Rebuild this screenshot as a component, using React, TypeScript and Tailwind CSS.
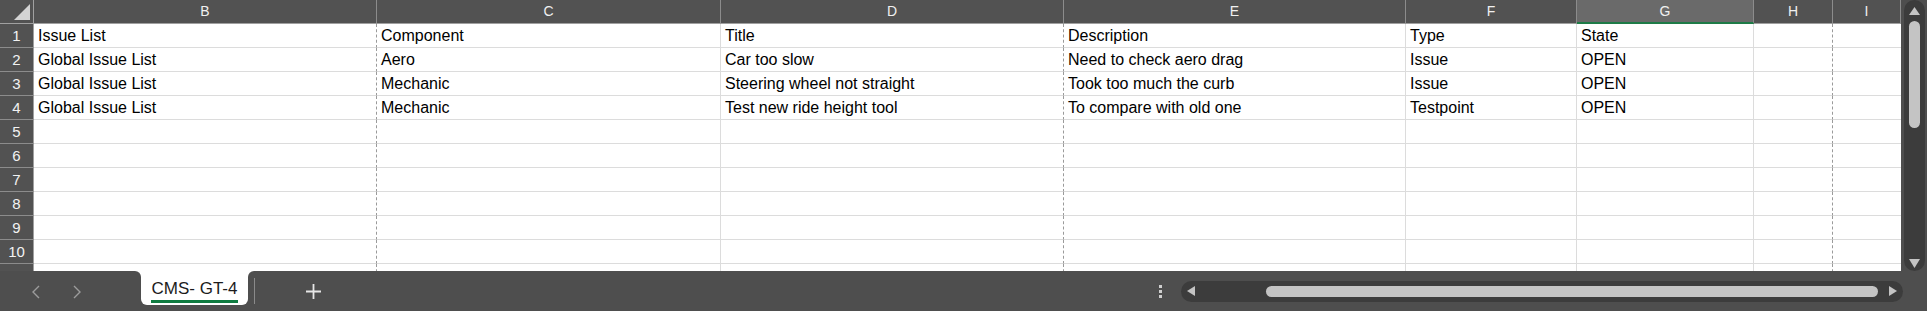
import React from 'react';

// Excel-like sheet view in dark chrome: column/row headers, grid, sheet tabs and scrollbars.

type Col = { label: string; width: string; border: string; selected?: boolean };

const columns: Col[] = [
  { label: 'B', width: 'w-[343px]', border: 'border-r [border-right-style:dashed] border-r-[#9a9a9a]' },
  { label: 'C', width: 'w-[344px]', border: 'border-r border-r-[#dcdcdc]' },
  { label: 'D', width: 'w-[343px]', border: 'border-r [border-right-style:dashed] border-r-[#9a9a9a]' },
  { label: 'E', width: 'w-[342px]', border: 'border-r border-r-[#dcdcdc]' },
  { label: 'F', width: 'w-[171px]', border: 'border-r border-r-[#dcdcdc]' },
  { label: 'G', width: 'w-[177px]', border: 'border-r border-r-[#dcdcdc]', selected: true },
  { label: 'H', width: 'w-[79px]', border: 'border-r [border-right-style:dashed] border-r-[#9a9a9a]' },
  { label: 'I', width: 'w-[68px]', border: '' },
];

const rows: string[][] = [
  ['Issue List', 'Component', 'Title', 'Description', 'Type', 'State', '', ''],
  ['Global Issue List', 'Aero', 'Car too slow', 'Need to check aero drag', 'Issue', 'OPEN', '', ''],
  ['Global Issue List', 'Mechanic', 'Steering wheel not straight', 'Took too much the curb', 'Issue', 'OPEN', '', ''],
  ['Global Issue List', 'Mechanic', 'Test new ride height tool', 'To compare with old one', 'Testpoint', 'OPEN', '', ''],
  ['', '', '', '', '', '', '', ''],
  ['', '', '', '', '', '', '', ''],
  ['', '', '', '', '', '', '', ''],
  ['', '', '', '', '', '', '', ''],
  ['', '', '', '', '', '', '', ''],
  ['', '', '', '', '', '', '', ''],
  ['', '', '', '', '', '', '', ''],
];

const HeaderRow = () => (
  <div className="flex h-[24px] shrink-0">
    <div className="w-[34px] h-[24px] bg-[#525252] border-r border-b border-[#a0a0a0] flex items-end justify-end pr-[3px] pb-[3px]">
      <svg width="16" height="16" viewBox="0 0 16 16">
        <polygon points="16,0 16,16 0,16" fill="#d4d4d4" />
      </svg>
    </div>
    {columns.map((c) => (
      <div
        key={c.label}
        className={`${c.width} h-[24px] flex items-center justify-center text-[14px] text-[#f0f0f0] border-r border-r-[#8c8c8c] ${
          c.selected ? 'bg-[#6a6a6a] border-b-2 border-b-[#1e7b47]' : 'bg-[#525252] border-b border-b-[#a0a0a0]'
        }`}
      >
        {c.label}
      </div>
    ))}
  </div>
);

const DataRow = ({ n, cells }: { n: number; cells: string[] }) => (
  <div className="flex h-[24px] shrink-0">
    <div className="w-[34px] h-[24px] bg-[#525252] border-r border-r-[#a0a0a0] border-b border-b-[#8c8c8c] flex items-center justify-center text-[15px] leading-[23px] text-[#f2f2f2]">
      {n}
    </div>
    {columns.map((c, i) => (
      <div
        key={c.label}
        className={`${c.width} ${c.border} h-[24px] border-b border-b-[#dcdcdc] bg-white pl-[4px] text-[16px] leading-[23px] text-black whitespace-nowrap overflow-hidden`}
      >
        {cells[i]}
      </div>
    ))}
  </div>
);

const VerticalScroll = () => (
  <div className="w-[26px] h-[271px] bg-[#4e4e4e] pl-[3px] pr-[2px] shrink-0">
    <div className="w-[21px] h-[271px] rounded-full bg-[#3c3c3c] flex flex-col items-center pt-[7px] pb-[3px]">
      <svg width="11" height="8" viewBox="0 0 11 8">
        <polygon points="5.5,0 11,8 0,8" fill="#c4c4c4" />
      </svg>
      <div className="w-[11px] h-[107px] mt-[6px] rounded-full bg-[#c4c4c4]" />
      <div className="flex-1" />
      <svg width="11" height="9" viewBox="0 0 11 9">
        <polygon points="0,0 11,0 5.5,9" fill="#c4c4c4" />
      </svg>
    </div>
  </div>
);

const Chevron = ({ dir }: { dir: 'left' | 'right' }) => (
  <svg width="8" height="14" viewBox="0 0 8 14">
    <polyline
      points={dir === 'left' ? '7,1 1,7 7,13' : '1,1 7,7 1,13'}
      fill="none"
      stroke="#9c9c9c"
      strokeWidth="1.4"
    />
  </svg>
);

const SheetBar = () => (
  <div className="flex h-[40px] bg-white shrink-0">
    {/* navigation arrows */}
    <div className="w-[141px] h-[40px] bg-[#4e4e4e] rounded-tr-[6px] flex items-center pl-[32px] pt-[1px]">
      <Chevron dir="left" />
      <div className="ml-[33px]">
        <Chevron dir="right" />
      </div>
    </div>

    {/* active tab */}
    <div className="w-[107px] h-[40px] bg-[#4e4e4e]">
      <div className="h-[34px] bg-white rounded-b-[6px] flex flex-col items-center pt-[8px]">
        <span className="text-[17px] leading-[19px] text-[#1c1c1c] whitespace-nowrap">CMS- GT-4</span>
        <div className="w-[87px] h-[3px] mt-[2px] bg-[#107c41]" />
      </div>
    </div>

    {/* new sheet + horizontal scroll */}
    <div className="flex-1 h-[40px] bg-[#4e4e4e] rounded-tl-[6px] flex items-center pr-[24px]">
      <div className="ml-[6px] w-px h-[26px] bg-[#8a8a8a]" />
      <div className="ml-[51px]">
        <svg width="15" height="15" viewBox="0 0 15 15">
          <path d="M7.5 0v15M0 7.5h15" stroke="#e6e6e6" strokeWidth="1.8" />
        </svg>
      </div>
      <div className="flex-1" />
      <div className="flex flex-col gap-[2px] pt-[1px]">
        <div className="w-[3px] h-[3px] bg-[#cfcfcf]" />
        <div className="w-[3px] h-[3px] bg-[#cfcfcf]" />
        <div className="w-[3px] h-[3px] bg-[#cfcfcf]" />
      </div>
      <div className="ml-[19px] w-[722px] h-[21px] rounded-full bg-[#3c3c3c] flex items-center px-[6px]">
        <svg width="8" height="10" viewBox="0 0 8 10">
          <polygon points="8,0 8,10 0,5" fill="#c4c4c4" />
        </svg>
        <div className="ml-[71px] w-[612px] h-[11px] rounded-full bg-[#c4c4c4]" />
        <div className="flex-1" />
        <svg width="8" height="10" viewBox="0 0 8 10">
          <polygon points="0,0 8,5 0,10" fill="#c4c4c4" />
        </svg>
      </div>
    </div>
  </div>
);

export default function App() {
  return (
    <div className="w-[1927px] h-[311px] flex flex-col overflow-hidden bg-[#4e4e4e] font-['Liberation_Sans',Arial,sans-serif]">
      <div className="flex h-[271px] shrink-0">
        <div className="w-[1901px] h-[271px] flex flex-col overflow-hidden">
          <HeaderRow />
          {rows.map((cells, i) => (
            <DataRow key={i} n={i + 1} cells={cells} />
          ))}
        </div>
        <VerticalScroll />
      </div>
      <SheetBar />
    </div>
  );
}
